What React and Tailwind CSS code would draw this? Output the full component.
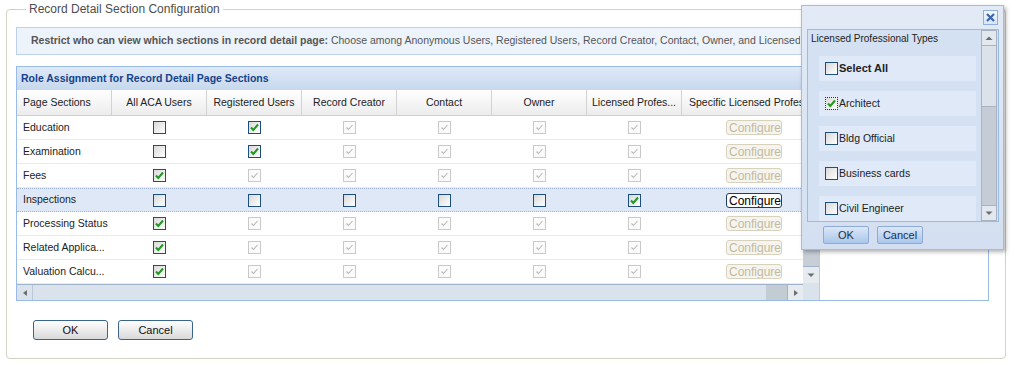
import React from 'react';

const FONT = "font-['Liberation_Sans',Arial,sans-serif]";

const Box = ({ kind, focus }) => {
  if (kind === 'dis') {
    return (
      <span className="inline-flex w-[13px] h-[13px] border border-[#c9c9c9] bg-[#fbfbfb]">
        <svg width="11" height="11" viewBox="0 0 11 11">
          <path d="M2.5 5.5 L4.5 7.5 L8.5 3" fill="none" stroke="#b9b9b9" strokeWidth="1.1" />
        </svg>
      </span>
    );
  }
  return (
    <span
      className={`inline-flex w-[13px] h-[13px] border bg-gradient-to-br from-[#d9d9d9] to-[#ffffff] ${
        focus ? 'border-dotted border-[#333]' : 'border-[#1c4f80]'
      }`}
    >
      {kind === 'on' && (
        <svg width="11" height="11" viewBox="0 0 11 11">
          <path d="M2 5.5 L4.3 8 L9 2.5" fill="none" stroke="#1f9a1f" strokeWidth="2" />
        </svg>
      )}
    </span>
  );
};

const Configure = ({ active }) => (
  <span
    className={`inline-block w-[56px] h-[15px] overflow-hidden rounded-[3px] border pl-[2px] text-[12px] leading-[15px] ${
      active ? 'border-[#1b3d6b] bg-white text-black' : 'border-[#d8d2bd] bg-[#f6f4ee] text-[#c2ba9f]'
    }`}
  >
    Configure
  </span>
);

const cols = [
  { label: 'Page Sections', w: 'w-[95px]', left: true },
  { label: 'All ACA Users', w: 'w-[95px]' },
  { label: 'Registered Users', w: 'w-[95px]' },
  { label: 'Record Creator', w: 'w-[95px]' },
  { label: 'Contact', w: 'w-[95px]' },
  { label: 'Owner', w: 'w-[95px]' },
  { label: 'Licensed Profes...', w: 'w-[95px]' },
  { label: 'Specific Licensed Profes', w: 'w-[144px]', spec: true },
];

const D = 'dis';
const rows = [
  { name: 'Education', v: ['off', 'on', D, D, D, D], active: false },
  { name: 'Examination', v: ['off', 'on', D, D, D, D], active: false },
  { name: 'Fees', v: ['on', D, D, D, D, D], active: false },
  { name: 'Inspections', v: ['off', 'off', 'off', 'off', 'off', 'on'], active: true },
  { name: 'Processing Status', v: ['on', D, D, D, D, D], active: false },
  { name: 'Related Applica...', v: ['on', D, D, D, D, D], active: false },
  { name: 'Valuation Calcu...', v: ['on', D, D, D, D, D], active: false },
];

const Tri = ({ dir }) => {
  const d = {
    left: 'M5 1 L1 4 L5 7 Z',
    right: 'M1 1 L5 4 L1 7 Z',
    up: 'M0.5 5 L4 1.5 L7.5 5 Z',
    down: 'M0.5 1.5 L4 5 L7.5 1.5 Z',
  }[dir];
  const horiz = dir === 'left' || dir === 'right';
  return (
    <svg width={horiz ? 6 : 8} height={horiz ? 8 : 6} viewBox={horiz ? '0 0 6 8' : '0 0 8 6'}>
      <path d={d} fill="#6b6f74" />
    </svg>
  );
};

const items = [
  { label: 'Select All', bold: true, kind: 'off' },
  { label: 'Architect', kind: 'on', focus: true },
  { label: 'Bldg Official', kind: 'off' },
  { label: 'Business cards', kind: 'off' },
  { label: 'Civil Engineer', kind: 'off' },
];

export default function App() {
  return (
    <div className={`relative w-[1017px] h-[367px] overflow-hidden bg-white ${FONT} text-[#222]`}>
      <fieldset className="ml-[6px] mt-[2px] w-[1000px] h-[357px] rounded-[4px] border border-[#d3d2c6] pl-[9px]">
        <legend className="ml-[10px] px-[3px] text-[12px] leading-[15px] text-[#4d4d4d]">
          Record Detail Section Configuration
        </legend>

        {/* info bar */}
        <div className="mt-[10px] flex h-[28px] w-[973px] items-center border border-[#bcd1ea] bg-[#edf3fb] pl-[14px] text-[10.5px] text-[#555]">
          <div className="w-[769px] overflow-hidden whitespace-nowrap">
            <span className="font-bold">Restrict who can view which sections in record detail page:</span>
            <span>&nbsp;Choose among Anonymous Users, Registered Users, Record Creator, Contact, Owner, and Licensed Professionals.</span>
          </div>
        </div>

        {/* grid */}
        <div className="mt-[11px] w-[973px] border border-[#99bbe8]">
          <div className="flex h-[23px] items-center bg-gradient-to-b from-[#dfe9f6] to-[#c6d8ee] pl-[4px] text-[10.5px] font-bold text-[#15428b]">
            Role Assignment for Record Detail Page Sections
          </div>
          <div className="flex">
            <div className="w-[786px] overflow-hidden">
              <div className="w-[900px]">
                <div className="flex h-[26px] border-b border-[#d0d0d0] bg-gradient-to-b from-[#ffffff] to-[#ececec] text-[10.5px] text-[#222]">
                  {cols.map((c) => (
                    <div
                      key={c.label}
                      className={`${c.w} flex shrink-0 items-center whitespace-nowrap overflow-hidden border-r border-[#d2d2d2] ${
                        c.left ? 'pl-[6px]' : c.spec ? 'pl-[7px]' : 'justify-center'
                      }`}
                    >
                      {c.label}
                    </div>
                  ))}
                </div>
                {rows.map((r) => (
                  <div
                    key={r.name}
                    className={`flex h-[24px] text-[10.5px] ${
                      r.active
                        ? 'border-y border-dotted border-[#9fb3d9] bg-[#dfe8f6]'
                        : 'border-b border-[#ebebeb]'
                    }`}
                  >
                    <div className="flex w-[95px] shrink-0 items-center pl-[6px] whitespace-nowrap">{r.name}</div>
                    {r.v.map((k, i) => (
                      <div key={i} className="flex w-[95px] shrink-0 items-center justify-center">
                        <Box kind={k} />
                      </div>
                    ))}
                    <div className="flex w-[144px] shrink-0 items-center justify-center">
                      <Configure active={r.active} />
                    </div>
                  </div>
                ))}
              </div>
              {/* horizontal scrollbar */}
              <div className="flex h-[16px] border-t border-[#9fb4cb] bg-[#dae3ec]">
                <div className="flex w-[16px] items-center justify-center border-r border-[#b9c7d6]">
                  <Tri dir="left" />
                </div>
                <div className="flex-1" />
                <div className="w-[21px] bg-[#c3cbd3]" />
                <div className="flex w-[16px] items-center justify-center border-l border-[#9fb4cb] bg-[#e6ebf0]">
                  <Tri dir="right" />
                </div>
              </div>
            </div>
            {/* vertical scrollbar */}
            <div className="flex w-[17px] flex-col border-r border-[#b7cbe3]">
              <div className="flex h-[17px] items-center justify-center border-b border-[#b9c7d6] bg-[#e6ebf0]">
                <Tri dir="up" />
              </div>
              <div className="flex-1 bg-[#c7ced6]" />
              <div className="flex h-[17px] items-center justify-center border-t border-[#9fb4cb] bg-[#e6ebf0]">
                <Tri dir="down" />
              </div>
              <div className="h-[17px] bg-[#dae3ec]" />
            </div>
            <div className="flex-1 bg-white" />
          </div>
        </div>

        {/* buttons */}
        <div className="ml-[17px] mt-[19px] flex gap-[10px] text-[11px]">
          <button className="h-[20px] w-[75px] rounded-[3px] border border-[#39648f] bg-gradient-to-b from-[#ffffff] to-[#d9d9d9] text-[#111]">
            OK
          </button>
          <button className="h-[20px] w-[75px] rounded-[3px] border border-[#39648f] bg-gradient-to-b from-[#ffffff] to-[#d9d9d9] text-[#111]">
            Cancel
          </button>
        </div>
      </fieldset>

      {/* popup */}
      <div className="absolute left-[801px] top-[5px] flex h-[245px] w-[203px] flex-col border border-[#a9bcd6] bg-gradient-to-b from-[#e2eaf6] to-[#d3dff0] shadow-[2px_2px_4px_rgba(0,0,0,0.3)]">
        <div className="flex h-[23px] justify-end pr-[5px] pt-[4px]">
          <span className="flex h-[15px] w-[15px] items-center justify-center border border-[#8fb0dc] bg-gradient-to-b from-[#f4f8fd] to-[#d8e5f5]">
            <svg width="11" height="11" viewBox="0 0 11 11">
              <path d="M2 2 L9 9 M9 2 L2 9" stroke="#3a67b0" strokeWidth="2.2" />
            </svg>
          </span>
        </div>
        <div className="ml-[5px] flex h-[193px] w-[192px] border border-[#99bbe8] bg-[#d4e1f2]">
          <div className="flex-1 overflow-hidden">
            <div className="flex h-[17px] items-center pl-[3px] text-[10px] text-[#222]">Licensed Professional Types</div>
            <div className="mt-[9px] flex flex-col gap-[10px] pl-[11px]">
              {items.map((it) => (
                <div key={it.label} className="flex h-[25px] w-[157px] shrink-0 items-center bg-[#dfe9f8] pl-[6px] text-[10.5px]">
                  <Box kind={it.kind} focus={it.focus} />
                  <span className={`ml-[1px] ${it.bold ? 'font-bold text-[11px]' : ''}`}>{it.label}</span>
                </div>
              ))}
            </div>
          </div>
          <div className="mr-[1px] flex w-[16px] flex-col border border-[#a7b3c2] bg-[#c5ccd5]">
            <div className="flex h-[15px] items-center justify-center border-b border-[#a7b3c2] bg-[#e3e8ee]">
              <Tri dir="up" />
            </div>
            <div className="h-[61px] border-b border-[#a7b3c2] bg-[#dbe2ea]" />
            <div className="flex-1" />
            <div className="flex h-[15px] items-center justify-center border-t border-[#a7b3c2] bg-[#e3e8ee]">
              <Tri dir="down" />
            </div>
          </div>
        </div>
        <div className="ml-[21px] mt-[4px] flex gap-[8px] text-[11px]">
          <button className="h-[18px] w-[46px] rounded-[2px] border border-[#8eaad6] bg-gradient-to-b from-[#dbe7f7] to-[#aac6eb] text-[#1b2f4f]">
            OK
          </button>
          <button className="h-[18px] w-[46px] rounded-[2px] border border-[#8eaad6] bg-gradient-to-b from-[#dbe7f7] to-[#aac6eb] text-[#1b2f4f]">
            Cancel
          </button>
        </div>
      </div>
    </div>
  );
}
